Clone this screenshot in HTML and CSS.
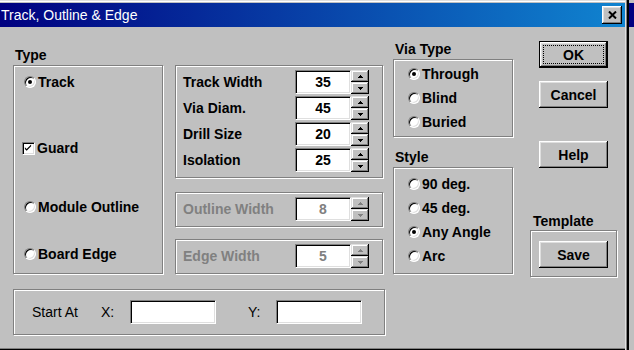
FILE: index.html
```html
<!DOCTYPE html>
<html lang="en">
<head>
  <meta charset="UTF-8" />
  <title>Track, Outline &amp; Edge</title>
  <link rel="stylesheet" href="styles.css">
</head>
<body>
  <div class="screen">
    <div class="dialog">
      <div class="titlebar">
        <span class="title">Track, Outline &amp; Edge</span>
        <button class="close">
          <svg width="9" height="8" viewBox="0 0 9 8"><path d="M1 0.5 L8 7.5 M8 0.5 L1 7.5" stroke="#000" stroke-width="2" fill="none"/></svg>
        </button>
      </div>

      <div class="content">
        <div class="top-row">
          <div class="col col-type">
            <div class="group-label">Type</div>
            <div class="group type-box">
              <div class="opt"><span class="radio checked"></span>Track</div>
              <div class="opt opt-guard">
                <span class="check"><svg width="9" height="9" viewBox="0 0 9 9"><path d="M1 3 V5 L3 7 L8 2 V0 L3 5 Z" fill="#000"/></svg></span>Guard
              </div>
              <div class="opt opt-module"><span class="radio"></span>Module Outline</div>
              <div class="opt opt-board"><span class="radio"></span>Board Edge</div>
            </div>
          </div>

          <div class="col col-params">
            <div class="group params">
              <div class="field">
                <span class="field-label">Track Width</span>
                <span class="num">35</span>
                <span class="spin-btns"><span class="up"></span><span class="down"></span></span>
              </div>
              <div class="field">
                <span class="field-label">Via Diam.</span>
                <span class="num">45</span>
                <span class="spin-btns"><span class="up"></span><span class="down"></span></span>
              </div>
              <div class="field">
                <span class="field-label">Drill Size</span>
                <span class="num">20</span>
                <span class="spin-btns"><span class="up"></span><span class="down"></span></span>
              </div>
              <div class="field">
                <span class="field-label">Isolation</span>
                <span class="num">25</span>
                <span class="spin-btns"><span class="up"></span><span class="down"></span></span>
              </div>
            </div>
            <div class="group single disabled outline-box">
              <div class="field">
                <span class="field-label">Outline Width</span>
                <span class="num">8</span>
                <span class="spin-btns"><span class="up"></span><span class="down"></span></span>
              </div>
            </div>
            <div class="group single disabled edge-box">
              <div class="field">
                <span class="field-label">Edge Width</span>
                <span class="num">5</span>
                <span class="spin-btns"><span class="up"></span><span class="down"></span></span>
              </div>
            </div>
          </div>

          <div class="col col-via">
            <div class="group-label">Via Type</div>
            <div class="group radio-list via-box">
              <div class="opt"><span class="radio checked"></span>Through</div>
              <div class="opt"><span class="radio"></span>Blind</div>
              <div class="opt"><span class="radio"></span>Buried</div>
            </div>
            <div class="group-label style-label">Style</div>
            <div class="group radio-list style-box">
              <div class="opt"><span class="radio"></span>90 deg.</div>
              <div class="opt"><span class="radio"></span>45 deg.</div>
              <div class="opt"><span class="radio checked"></span>Any Angle</div>
              <div class="opt"><span class="radio"></span>Arc</div>
            </div>
          </div>

          <div class="col col-actions">
            <div class="action-btns">
              <button class="btn btn-default">OK</button>
              <button class="btn btn-cancel">Cancel</button>
              <button class="btn btn-help">Help</button>
            </div>
            <div class="group-label template-label">Template</div>
            <div class="group template-box">
              <button class="btn">Save</button>
            </div>
          </div>
        </div>

        <div class="group start-box">
          <span class="start-label">Start At</span>
          <span class="xy">X:</span>
          <span class="coord"></span>
          <span class="xy xy-y">Y:</span>
          <span class="coord"></span>
        </div>
      </div>
    </div>
    <div class="edge">
      <div class="behind-title"></div>
    </div>
  </div>
</body>
</html>
```

FILE: styles.css
```css
* { margin: 0; padding: 0; box-sizing: border-box; }
body {
  width: 634px;
  height: 350px;
  overflow: hidden;
  background: #c0c0c0;
  font-family: 'Liberation Sans', Arial, sans-serif;
  font-size: 14px;
  font-weight: bold;
  color: #000;
}
.screen { display: flex; height: 350px; }

/* dialog frame */
.dialog {
  width: 625px;
  height: 350px;
  padding-top: 3px;
  background: #c0c0c0;
  box-shadow: inset 0 1px #dfdfdf, inset 0 2px #fff, inset 0 -1px #000, inset 0 -2px #808080;
}
.edge {
  flex: 1;
  padding-top: 3px;
  padding-left: 4px;
  background: linear-gradient(to right, #dfdfdf 0 1px, #808080 1px 2px, #000 2px 4px, #c0c0c0 4px);
}
.behind-title { height: 24px; background: #000080; }

.titlebar {
  height: 24px;
  display: flex;
  align-items: center;
  justify-content: space-between;
  padding-right: 3px;
  background: linear-gradient(to right, #000080, #1084d0);
}
.title {
  color: #fff;
  font-size: 14px;
  font-weight: normal;
  padding-left: 1px;
}
.close {
  width: 20px;
  height: 18px;
  border: none;
  background: #c0c0c0;
  display: flex;
  align-items: center;
  justify-content: center;
  box-shadow: inset -1px -1px #000, inset 1px 1px #fff, inset -2px -2px #808080, inset 2px 2px #dfdfdf;
}

/* layout */
.content { padding-left: 13px; }
.top-row {
  display: flex;
  align-items: flex-start;
  height: 262px;
}
.col-type { width: 150px; margin-top: 20px; }
.col-params { width: 208px; margin-left: 12px; margin-top: 38px; }
.col-via { width: 120px; margin-left: 10px; margin-top: 14px; }
.col-actions { width: 87px; margin-left: 17px; margin-top: 14px; }

/* group boxes */
.group-label {
  line-height: 16px;
  height: 16px;
  padding-left: 2px;
  margin-bottom: 2px;
}
.group {
  border: 1px solid #808080;
  box-shadow: inset 1px 1px #fff, 1px 1px #fff;
}

/* radios and checkbox */
.opt {
  display: flex;
  align-items: center;
  gap: 2px;
  height: 16px;
}
.radio {
  position: relative;
  flex: none;
  width: 12px;
  height: 12px;
  border-radius: 50%;
  background: #fff;
  border: 1px solid;
  border-color: #808080 #fff #fff #808080;
  box-shadow: inset 1px 1px #000, inset -1px -1px #dfdfdf;
}
.radio.checked::after {
  content: '';
  position: absolute;
  left: 3px;
  top: 3px;
  width: 4px;
  height: 4px;
  border-radius: 50%;
  background: #000;
}
.check {
  flex: none;
  width: 13px;
  height: 13px;
  margin-left: -2px;
  padding: 2px;
  background: #fff;
  border: 1px solid;
  border-color: #808080 #fff #fff #808080;
  box-shadow: inset 1px 1px #000, inset -1px -1px #dfdfdf;
  display: flex;
}
.check svg { margin: -1px 0 0 -1px; }

.type-box { height: 209px; padding: 8px 0 0 10px; }
.opt-guard { margin-top: 50px; }
.opt-module { margin-top: 43px; }
.opt-board { margin-top: 31px; }

.radio-list .opt + .opt { margin-top: 8px; }
.via-box { padding: 6px 0 6px 14px; }
.style-label { margin-top: 12px; }
.style-box { padding: 8px 0 9px 14px; }

/* spin fields */
.params { padding: 4px 0 5px 7px; }
.single { padding: 4px 0 5px 7px; }
.outline-box { margin-top: 14px; }
.edge-box { margin-top: 12px; }
.field {
  display: flex;
  align-items: center;
  height: 24px;
}
.field + .field { margin-top: 2px; }
.field-label { width: 112px; }
.num, .coord {
  height: 24px;
  background: #fff;
  border: 1px solid;
  border-color: #808080 #fff #fff #808080;
  box-shadow: inset 1px 1px #000, inset -1px -1px #dfdfdf;
}
.num {
  width: 56px;
  display: flex;
  align-items: center;
  justify-content: center;
}
.spin-btns {
  display: flex;
  flex-direction: column;
  width: 18px;
  height: 24px;
}
.spin-btns span {
  height: 12px;
  display: flex;
  align-items: center;
  justify-content: center;
  background: #c0c0c0;
  box-shadow: inset -1px -1px #000, inset 1px 1px #dfdfdf, inset -2px -2px #808080, inset 2px 2px #fff;
}
.spin-btns span::before {
  content: '';
  width: 1px;
  height: 1px;
  background: currentColor;
}
.spin-btns .up::before {
  margin-top: -2px;
  box-shadow: -1px 1px, 0 1px, 1px 1px, -2px 2px, -1px 2px, 0 2px, 1px 2px, 2px 2px;
}
.spin-btns .down::before {
  margin-top: -2px;
  box-shadow: -2px 0, -1px 0, 1px 0, 2px 0, -1px 1px, 0 1px, 1px 1px, 0 2px;
}
.disabled .field-label,
.disabled .num,
.disabled .spin-btns span { color: #808080; }

/* buttons */
.btn {
  display: flex;
  align-items: center;
  justify-content: center;
  width: 69px;
  height: 27px;
  border: none;
  background: #c0c0c0;
  font: inherit;
  color: #000;
  box-shadow: inset -1px -1px #000, inset 1px 1px #fff, inset -2px -2px #808080, inset 2px 2px #dfdfdf;
}
.btn-default {
  position: relative;
  box-shadow: inset 0 0 0 1px #000, inset -2px -2px #000, inset 2px 2px #fff, inset -3px -3px #808080, inset 3px 3px #dfdfdf;
}
.btn-default::after {
  content: '';
  position: absolute;
  inset: 4px;
  border: 1px dotted #000;
}
.action-btns { padding-left: 9px; }
.btn-cancel { margin-top: 13px; }
.btn-help { margin-top: 33px; }
.template-label { margin-top: 45px; padding-left: 3px; margin-bottom: 1px; }
.template-box { height: 47px; padding: 10px 0 0 8px; }

/* start at */
.start-box {
  width: 372px;
  height: 46px;
  display: flex;
  align-items: center;
  padding-left: 18px;
  font-weight: normal;
}
.start-label { width: 69px; }
.xy { width: 29px; }
.xy-y { width: 28px; margin-left: 32px; }
.coord { width: 86px; }
```
